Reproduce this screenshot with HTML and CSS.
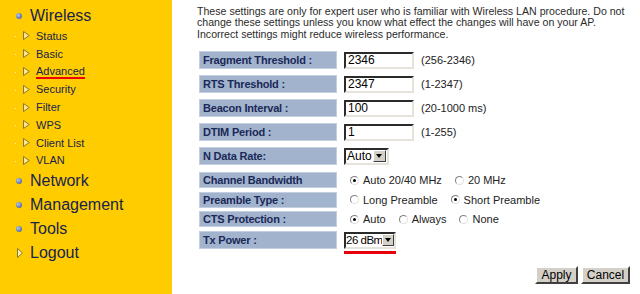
FILE: index.html
```html
<!DOCTYPE html>
<html>
<head>
<meta charset="utf-8">
<title>Wireless Advanced</title>
<link rel="stylesheet" href="styles.css">
</head>
<body>
<div class="page">
  <nav class="side">
    <div class="main-item"><span class="ball"></span><span>Wireless</span></div>
    <ul class="sub">
      <li><i class="dot"></i><svg class="tri" width="7" height="9" viewBox="0 0 7 9"><path d="M0.5 0.5 L6.3 4.5 L0.5 8.5 Z"/></svg><span>Status</span></li>
      <li><i class="dot"></i><svg class="tri" width="7" height="9" viewBox="0 0 7 9"><path d="M0.5 0.5 L6.3 4.5 L0.5 8.5 Z"/></svg><span>Basic</span></li>
      <li><i class="dot"></i><svg class="tri" width="7" height="9" viewBox="0 0 7 9"><path d="M0.5 0.5 L6.3 4.5 L0.5 8.5 Z"/></svg><span class="current">Advanced</span></li>
      <li><i class="dot"></i><svg class="tri" width="7" height="9" viewBox="0 0 7 9"><path d="M0.5 0.5 L6.3 4.5 L0.5 8.5 Z"/></svg><span>Security</span></li>
      <li><i class="dot"></i><svg class="tri" width="7" height="9" viewBox="0 0 7 9"><path d="M0.5 0.5 L6.3 4.5 L0.5 8.5 Z"/></svg><span>Filter</span></li>
      <li><i class="dot"></i><svg class="tri" width="7" height="9" viewBox="0 0 7 9"><path d="M0.5 0.5 L6.3 4.5 L0.5 8.5 Z"/></svg><span>WPS</span></li>
      <li><i class="dot"></i><svg class="tri" width="7" height="9" viewBox="0 0 7 9"><path d="M0.5 0.5 L6.3 4.5 L0.5 8.5 Z"/></svg><span>Client List</span></li>
      <li><i class="dot"></i><svg class="tri" width="7" height="9" viewBox="0 0 7 9"><path d="M0.5 0.5 L6.3 4.5 L0.5 8.5 Z"/></svg><span>VLAN</span></li>
    </ul>
    <div class="main-item"><span class="ball"></span><span>Network</span></div>
    <div class="main-item"><span class="ball"></span><span>Management</span></div>
    <div class="main-item"><span class="ball"></span><span>Tools</span></div>
    <div class="main-item"><svg class="tri-big" width="6" height="10" viewBox="0 0 6 10"><path d="M0.5 0.5 L5.5 5 L0.5 9.5 Z"/></svg><span>Logout</span></div>
  </nav>

  <main class="content">
    <p class="intro">These settings are only for expert user who is familiar with Wireless LAN procedure. Do not change these settings unless you know what effect the changes will have on your AP. Incorrect settings might reduce wireless performance.</p>

    <div class="form">
      <div class="row in">
        <div class="lbl">Fragment Threshold :</div>
        <input class="txt" type="text" value="2346"><span class="hint">(256-2346)</span>
      </div>
      <div class="row in">
        <div class="lbl">RTS Threshold :</div>
        <input class="txt" type="text" value="2347"><span class="hint">(1-2347)</span>
      </div>
      <div class="row in">
        <div class="lbl">Beacon Interval :</div>
        <input class="txt" type="text" value="100"><span class="hint">(20-1000 ms)</span>
      </div>
      <div class="row in">
        <div class="lbl">DTIM Period :</div>
        <input class="txt" type="text" value="1"><span class="hint">(1-255)</span>
      </div>
      <div class="row in last-in">
        <div class="lbl">N Data Rate:</div>
        <span class="sel sel-auto"><span class="sel-val">Auto</span><span class="sel-btn"></span></span>
      </div>
      <div class="row rad">
        <div class="lbl">Channel Bandwidth</div>
        <div class="opts">
          <span class="opt"><i class="radio on"></i>Auto 20/40 MHz</span>
          <span class="opt"><i class="radio"></i>20 MHz</span>
        </div>
      </div>
      <div class="row rad">
        <div class="lbl">Preamble Type :</div>
        <div class="opts">
          <span class="opt"><i class="radio"></i>Long Preamble</span>
          <span class="opt"><i class="radio on"></i>Short Preamble</span>
        </div>
      </div>
      <div class="row rad">
        <div class="lbl">CTS Protection :</div>
        <div class="opts">
          <span class="opt"><i class="radio on"></i>Auto</span>
          <span class="opt"><i class="radio"></i>Always</span>
          <span class="opt"><i class="radio"></i>None</span>
        </div>
      </div>
      <div class="row tx">
        <div class="lbl">Tx Power :</div>
        <span class="mark"><span class="sel sel-tx"><span class="sel-val">26 dBm</span><span class="sel-btn"></span></span></span>
      </div>
    </div>

    <div class="buttons">
      <button class="btn btn-apply" type="button">Apply</button>
      <button class="btn btn-cancel" type="button">Cancel</button>
    </div>
  </main>
</div>
</body>
</html>
```

FILE: styles.css
```css
html, body {
  margin: 0;
  padding: 0;
  background: #ffffff;
}

.page {
  display: flex;
  width: 640px;
  height: 294px;
  overflow: hidden;
  font-family: "Liberation Sans", Arial, sans-serif;
}

/* ---------- sidebar ---------- */
.side {
  width: 172px;
  flex: 0 0 172px;
  background: #ffcc00;
  padding-top: 4px;
  box-sizing: border-box;
  color: #17234d;
}

.main-item {
  display: flex;
  align-items: center;
  height: 24px;
  padding-left: 16px;
  font-size: 16px;
}

.main-item:first-child {
  height: 23px;
}

.ball {
  width: 6px;
  height: 6px;
  border-radius: 50%;
  background: radial-gradient(circle at 35% 35%, #b9c6e6 0%, #6a80b8 55%, #41558c 100%);
  margin-right: 8px;
}

.tri-big {
  margin-left: 1px;
  margin-right: 7px;
  fill: #fff0a8;
  stroke: #8a7740;
  stroke-width: 1;
}

.sub {
  list-style: none;
  margin: 0;
  padding: 0;
}

.sub li {
  display: flex;
  align-items: center;
  height: 17.8px;
  padding-left: 15px;
  font-size: 11px;
}

.dot {
  width: 1px;
  height: 1px;
  background: #fff3b0;
  margin-top: 2px;
  margin-right: 7px;
}

.tri {
  margin-right: 6px;
  fill: #ffe58a;
  stroke: #8a7740;
  stroke-width: 1;
}

.current {
  text-decoration: underline;
  text-decoration-color: #e8000b;
  text-decoration-thickness: 2px;
  text-underline-offset: 2px;
}

/* ---------- content ---------- */
.content {
  flex: 1;
  padding: 6px 0 0 25px;
  box-sizing: border-box;
}

.intro {
  margin: 0;
  width: 443px;
  font-size: 10.6px;
  line-height: 11.4px;
  color: #2b2b2b;
}

.form {
  margin-top: 11px;
  margin-left: 2px;
  display: flex;
  flex-direction: column;
}

.row {
  display: flex;
  align-items: center;
  font-size: 11px;
  color: #222222;
}

.row.in {
  margin-bottom: 6px;
}

.row.last-in {
  margin-bottom: 7px;
}

.row.rad {
  margin-bottom: 3.5px;
}

.row.tx {
  align-items: flex-start;
}

.lbl {
  width: 138px;
  height: 18px;
  box-sizing: border-box;
  display: flex;
  align-items: center;
  padding-left: 3px;
  margin-right: 7px;
  background: #a2b3ce;
  border: 1px solid #c4cee1;
  font-weight: bold;
  font-size: 11px;
  letter-spacing: -0.2px;
  color: #1a2957;
  white-space: nowrap;
}

.row.rad .lbl {
  height: 16px;
}

.txt {
  width: 70px;
  height: 17px;
  box-sizing: border-box;
  margin: 0;
  padding: 0 2px;
  border: 2px inset #e0ddd6;
  border-top-color: #7f7f7f;
  border-left-color: #7f7f7f;
  border-right-color: #e6e3dc;
  border-bottom-color: #e6e3dc;
  font-family: "Liberation Sans", Arial, sans-serif;
  font-size: 12px;
  color: #000000;
  background: #ffffff;
}

.hint {
  margin-left: 7px;
  color: #222222;
}

/* fake select */
.sel {
  display: inline-flex;
  align-items: center;
  height: 17px;
  box-sizing: border-box;
  padding-right: 1px;
  border: 2px inset #e0ddd6;
  border-top-color: #7f7f7f;
  border-left-color: #7f7f7f;
  border-right-color: #e6e3dc;
  border-bottom-color: #e6e3dc;
  background: #ffffff;
  color: #000000;
  font-size: 12px;
}

.sel-auto {
  width: 45px;
}

.sel-tx {
  width: 52px;
  padding-right: 0;
  font-size: 11.5px;
  letter-spacing: -0.5px;
}

.sel-val {
  flex: 1;
  min-width: 0;
  padding-left: 1px;
  line-height: 13px;
  white-space: nowrap;
}

.sel-tx .sel-val {
  padding-left: 0;
}

.sel-btn {
  position: relative;
  flex: 0 0 13px;
  width: 13px;
  height: 12px;
  box-sizing: border-box;
  background: #d4d0c8;
  border: 1px solid;
  border-color: #ffffff #404040 #404040 #ffffff;
}

.sel-tx .sel-btn {
  flex-basis: 12px;
  width: 12px;
}

.sel-btn::after {
  content: "";
  position: absolute;
  left: 2px;
  top: 3px;
  border-left: 3.5px solid transparent;
  border-right: 3.5px solid transparent;
  border-top: 4px solid #000000;
}

.sel-tx .sel-btn::after {
  left: 1.5px;
}

.mark {
  display: inline-block;
  margin-top: 1px;
  padding-bottom: 2px;
  border-bottom: 3px solid #e8000b;
}

/* radios */
.opts {
  display: flex;
  align-items: center;
  gap: 13px;
  margin-left: 6px;
}

.opt {
  display: inline-flex;
  align-items: center;
  color: #222222;
  white-space: nowrap;
}

.radio {
  position: relative;
  width: 9px;
  height: 9px;
  box-sizing: border-box;
  border-radius: 50%;
  border: 1px solid;
  border-color: #808080 #e0e0e0 #e0e0e0 #808080;
  background: #ffffff;
  margin-right: 4px;
}

.radio.on::after {
  content: "";
  position: absolute;
  left: 2px;
  top: 2px;
  width: 3px;
  height: 3px;
  border-radius: 50%;
  background: #000000;
}

/* buttons */
.buttons {
  display: flex;
  justify-content: flex-end;
  gap: 3px;
  margin-top: 12px;
  padding-right: 10px;
}

.btn {
  height: 18px;
  margin: 0;
  padding: 0;
  box-sizing: border-box;
  background: #d4d0c8;
  border: 2px solid;
  border-color: #ffffff #404040 #404040 #ffffff;
  font-family: "Liberation Sans", Arial, sans-serif;
  font-size: 12px;
  color: #000000;
}

.btn-apply {
  width: 43px;
}

.btn-cancel {
  width: 49px;
}
```
